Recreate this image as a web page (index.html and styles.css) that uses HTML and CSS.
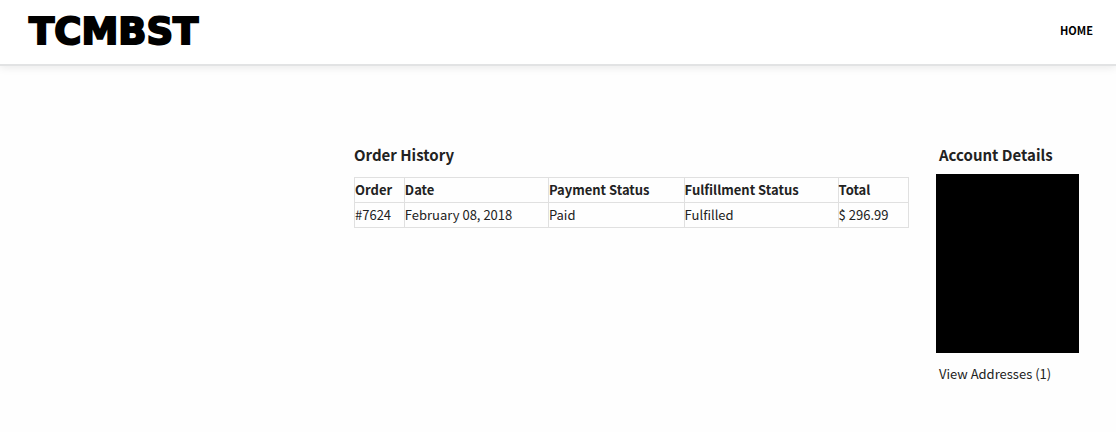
FILE: index.html
```
<!DOCTYPE html>
<html lang="en">
<head>
  <meta charset="UTF-8" />
  <meta name="viewport" content="width=device-width, initial-scale=1.0" />
  <title>TCMBST - Account</title>
  <link rel="stylesheet" href="styles.css">
</head>
<body>

  <!-- Header -->
  <header class="site-header">
    <a class="logo" href="#">TCMBST</a>
    <nav class="site-nav">
      <a href="#">HOME</a>
    </nav>
  </header>

  <main class="account">
    <!-- Order History -->
    <section class="orders">
      <h2>Order History</h2>
      <table class="order-table">
        <colgroup>
          <col class="col-order">
          <col class="col-date">
          <col class="col-payment">
          <col class="col-fulfillment">
          <col class="col-total">
        </colgroup>
        <thead>
          <tr>
            <th>Order</th>
            <th>Date</th>
            <th>Payment Status</th>
            <th>Fulfillment Status</th>
            <th>Total</th>
          </tr>
        </thead>
        <tbody>
          <tr>
            <td><a href="#">#7624</a></td>
            <td>February 08, 2018</td>
            <td>Paid</td>
            <td>Fulfilled</td>
            <td>$ 296.99</td>
          </tr>
        </tbody>
      </table>
    </section>

    <!-- Account Details -->
    <aside class="details">
      <h2>Account Details</h2>
      <div class="details-hidden"></div>
      <a href="#">View Addresses (1)</a>
    </aside>
  </main>

</body>
</html>
```

FILE: styles.css
```
* {
  box-sizing: border-box;
}

body {
  margin: 0;
  background-color: #fefefe;
  color: #222;
  font-family: "Noto Sans CJK SC", "Open Sans", sans-serif;
  font-size: 13px;
  line-height: 24px;
}

a {
  color: inherit;
  text-decoration: none;
}

.site-header {
  display: flex;
  align-items: center;
  justify-content: space-between;
  padding: 10px 23px 10px 29px;
  background-color: #fff;
  border-bottom: 2px solid #e2e3e4;
  box-shadow: 0 2px 8px rgba(0, 0, 0, 0.08);
}

.logo {
  color: #000;
  font-family: "DejaVu Sans", sans-serif;
  font-size: 37px;
  font-weight: bold;
  line-height: 44px;
  -webkit-text-stroke: 2px #000;
}

.site-nav {
  padding-bottom: 4px;
}

.site-nav a {
  color: #000;
  font-size: 11px;
  font-weight: bold;
}

.account {
  display: grid;
  grid-template-columns: 294fr 555fr 147fr;
  column-gap: 30px;
  padding: 77px 30px 44px;
}

.orders {
  grid-column: 2;
}

h2 {
  margin: 0;
  font-size: 15px;
  font-weight: bold;
  line-height: 24px;
}

.order-table {
  width: 100%;
  margin-top: 10px;
  border-collapse: collapse;
  table-layout: fixed;
}

.order-table th,
.order-table td {
  padding: 0;
  border: 1px solid #e0e0e0;
  text-align: left;
}

.col-order {
  width: 9%;
}

.col-date {
  width: 26%;
}

.col-payment {
  width: 24.5%;
}

.col-fulfillment {
  width: 27.8%;
}

.col-total {
  width: 12.7%;
}

.details-hidden {
  height: 179px;
  margin: 7px 7px 9px -3px;
  background-color: #000;
}
```
